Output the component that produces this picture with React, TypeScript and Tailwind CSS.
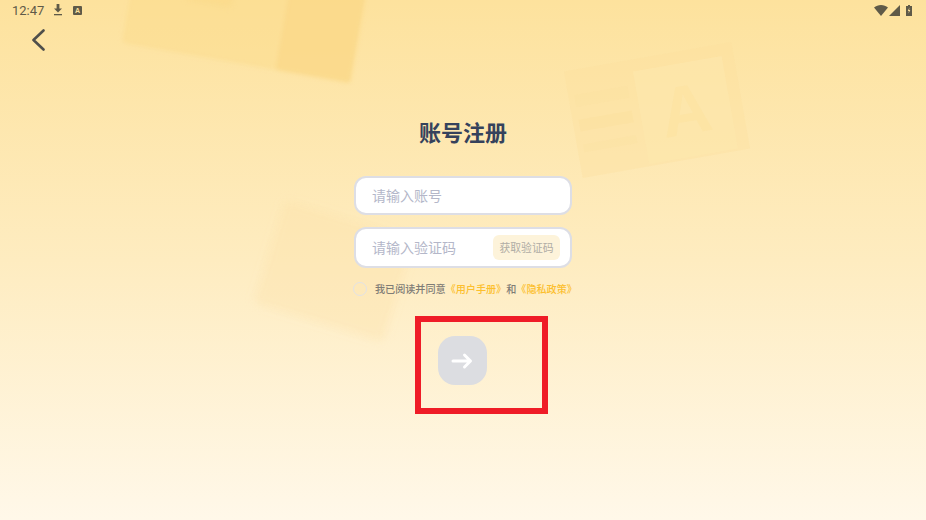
import React from "react";

const cjk = { fontFamily: '"Noto Sans CJK SC", "Noto Sans", sans-serif' };

function Decor() {
  return (
    <div className="absolute inset-0 overflow-hidden pointer-events-none">
      {/* top-left book */}
      <div className="absolute left-[131px] top-[-62px] w-[232px] h-[126px] rotate-[10deg] flex rounded-[4px] bg-[#fcdc8c]/50 blur-[2px]">
        <div className="flex-1 flex justify-center pt-[52px]">
          <div className="w-[46px] h-[20px] bg-[#fbda88]/60 rounded-[2px] blur-[2px]" />
        </div>
        <div className="w-[76px] bg-[#fbd788]/70 rounded-[3px]" />
      </div>
      {/* right book */}
      <div className="absolute left-[572px] top-[56px] w-[170px] h-[108px] rotate-[-10deg] flex bg-[#fce09e]/35">
        <div className="w-[66px] flex flex-col justify-around py-[18px] px-[6px]">
          <div className="h-[12px] bg-[#fbdd97]/15" />
          <div className="h-[12px] bg-[#fbdb93]/20" />
          <div className="h-[8px] bg-[#fbdd97]/15" />
        </div>
        <div className="flex-1 m-[12px] ml-[2px] mb-[2px] bg-[#fee7ae]/60 flex items-center justify-center">
          <span className="text-[70px] font-bold leading-none text-[#fce09c]/40" style={{ fontFamily: '"Liberation Sans", sans-serif' }}>A</span>
        </div>
      </div>
      {/* lower-left card */}
      <div className="absolute left-[266px] top-[217px] w-[136px] h-[108px] rotate-[17deg] rounded-[6px] bg-[#fddfa6]/35 blur-[4px]" />
    </div>
  );
}

function StatusBar() {
  return (
    <div className="flex items-center justify-between h-[21px] pl-[12px] pr-[12px] text-[#5f5a48] relative">
      <div className="flex items-center">
        <span className="text-[13px] w-[42px] leading-none" style={{ fontFamily: "Roboto, sans-serif" }}>12:47</span>
        <svg width="10" height="12" viewBox="0 0 10 12" className="ml-[-1px] mt-[-1px]" fill="currentColor">
          <path d="M3.6 0h2.8v4.4H9L5 8.4 1 4.4h2.6z" />
          <rect x="1" y="10" width="8" height="1.3" />
        </svg>
        <div className="ml-[10px] w-[9px] h-[9px] bg-[#5f5a48] rounded-[1px] flex items-center justify-center mt-[-1px]">
          <span className="text-[7px] font-bold leading-none text-[#fde29c]" style={{ fontFamily: '"Liberation Sans", sans-serif' }}>A</span>
        </div>
      </div>
      <div className="flex items-center mt-[-1px]">
        <svg width="14" height="11" viewBox="0 0 14 11" fill="currentColor"><path d="M0 2.6C2 .9 4.4 0 7 0s5 .9 7 2.6L7 11z" /></svg>
        <svg width="11" height="11" viewBox="0 0 11 11" fill="currentColor" className="ml-[1px]"><path d="M11 0v11H0z" /></svg>
        <svg width="6" height="11" viewBox="0 0 6 11" fill="currentColor" className="ml-[6px] mr-[2px]">
          <path d="M2 0h2v1h2v10H0V1h2z" />
          <path d="M3.4 2.5 1.8 6h1.1l-.4 2.6L4.3 5H3.1z" fill="#fde29c" />
        </svg>
      </div>
    </div>
  );
}

export default function App() {
  return (
    <div className="relative w-[926px] h-[520px] overflow-hidden bg-gradient-to-b from-[#fde29d] via-[#feecc0] via-50% to-[#fff8e9]" style={cjk}>
      <Decor />
      <div className="relative flex flex-col h-full">
        <StatusBar />
        <div className="pl-[32px] h-[38px] pt-[8px]">
          <svg width="13" height="22" viewBox="0 0 13 22" fill="none" stroke="#4f4f4b" strokeWidth="2.6" strokeLinecap="round" strokeLinejoin="round">
            <path d="M11.5 1.5 1.5 11l10 9.5" />
          </svg>
        </div>
        <div className="flex flex-col items-center">
          <h1 className="mt-[56px] text-[22px] leading-[32px] font-bold text-[#35425c]">账号注册</h1>
          <div className="w-[218px] mt-[29px] flex flex-col gap-[12px]">
            <div className="h-[39px] bg-white rounded-[12px] border-2 border-[#dddee5] pl-[17px] flex items-center text-[14px] text-[#b4b7c9]">
              <span className="ml-[-1px]">请输入账号</span>
            </div>
            <div className="h-[41px] bg-white rounded-[12px] border-2 border-[#dddee5] pl-[16px] pr-[10px] flex items-center justify-between text-[14px] text-[#b4b7c9]">
              <span>请输入验证码</span>
              <div className="w-[67px] h-[25px] rounded-[6px] bg-[#fdf3da] text-[10.8px] text-[#b0ada5] flex items-center justify-center">获取验证码</div>
            </div>
          </div>
          <div className="w-[222px] mt-[13px] flex items-center h-[16px] text-[10.1px] font-medium whitespace-nowrap">
            <div className="ml-[1px] w-[14px] h-[14px] rounded-full border border-[#e2e2e6] shrink-0" />
            <span className="ml-[8px] text-[#7f7c76]">我已阅读并同意</span>
            <span className="text-[#fcbf2e]">《用户手册》</span>
            <span className="text-[#7f7c76]">和</span>
            <span className="text-[#fcbf2e]">《隐私政策》</span>
          </div>
          <div className="mt-[19px] ml-[36px] w-[133px] h-[98px] border-[6px] border-[#ef1c27] pl-[17px] pt-[14px]">
            <div className="w-[49px] h-[49px] rounded-[17px] bg-[#dcdde1] flex items-center justify-center">
              <svg width="22" height="18" viewBox="0 0 22 18" fill="none" stroke="#ffffff" strokeWidth="3" strokeLinecap="round" strokeLinejoin="round">
                <path d="M2 9h17M13.5 3l6 6-6 6" />
              </svg>
            </div>
          </div>
        </div>
      </div>
    </div>
  );
}
